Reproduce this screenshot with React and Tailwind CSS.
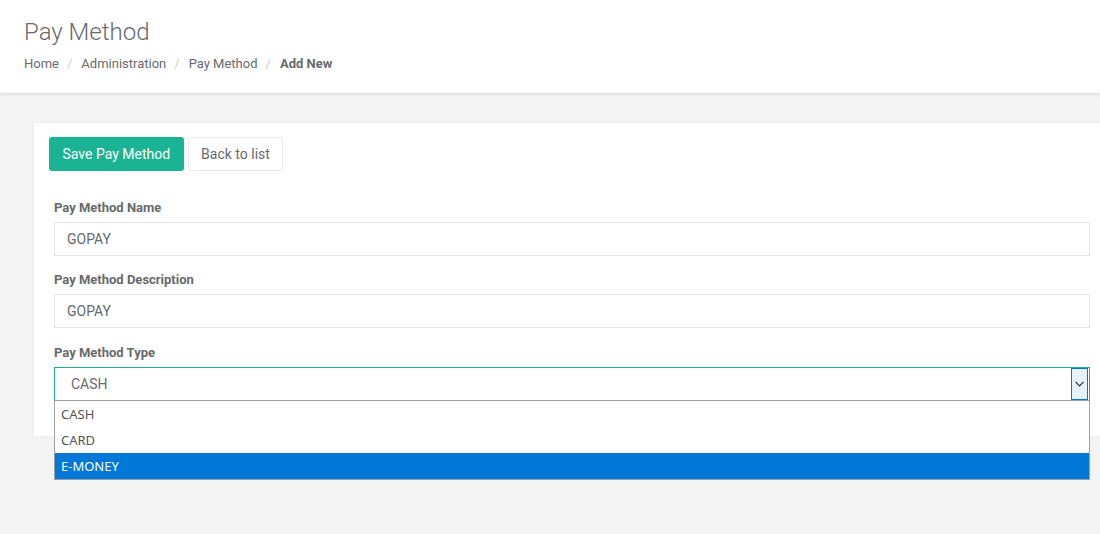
import React from "react";

const crumbs = ["Home", "Administration", "Pay Method"];

function Field({ label, value }) {
  return (
    <div className="mb-[15px]">
      <label className="block text-[13px] font-bold text-[#676a6c] mb-[5px] leading-[18px]">{label}</label>
      <div className="h-[34px] border border-[#e5e6e7] bg-white px-[12px] flex items-center text-[14px] text-[#676a6c]">
        {value}
      </div>
    </div>
  );
}

export default function App() {
  return (
    <div className="w-[1100px] h-[534px] overflow-hidden bg-[#f3f3f4] font-['Roboto',sans-serif] text-[#676a6c]">
      <div className="h-[93px] bg-white px-[24px] pt-[18px] shadow-[0_2px_3px_rgba(0,0,0,0.08)] relative z-10">
        <h2 className="text-[24px] font-light leading-[28px]">Pay Method</h2>
        <div className="flex items-center text-[13px] mt-[9px] leading-[18px]">
          {crumbs.map((c, i) => (
            <React.Fragment key={i}>
              <span>{c}</span>
              <span className="pl-[8px] pr-[9px] text-[#ccc]">/</span>
            </React.Fragment>
          ))}
          <span className="font-bold">Add New</span>
        </div>
      </div>

      <div className="pl-[34px] pt-[30px]">
        <div className="bg-white relative pl-[15px] pr-[10px] pt-[14px] h-[313px] shadow-[0_0_2px_rgba(0,0,0,0.08)]">
          <div className="flex gap-[4px]">
            <button className="h-[34px] px-[13.5px] bg-[#1ab394] text-white text-[14px] rounded-[3px]">Save Pay Method</button>
            <button className="h-[34px] px-[12.5px] bg-white border border-[#e7eaec] text-[#676a6c] text-[14px] rounded-[3px]">Back to list</button>
          </div>
          <div className="pl-[5px] pt-[28px]">
            <Field label="Pay Method Name" value="GOPAY" />
            <Field label="Pay Method Description" value="GOPAY" />
            <div className="relative pt-[1px]">
              <label className="block text-[13px] font-bold text-[#676a6c] mb-[5px] leading-[18px]">Pay Method Type</label>
              <div className="h-[34px] border border-[#1ab394] bg-white flex items-center justify-between text-[14px] text-[#676a6c] pl-[16px] pr-[1px]">
                <span>CASH</span>
                <span className="w-[17px] h-[32px] bg-[#e5f1fb] border border-[#0078d7] flex items-center justify-center">
                  <svg width="9" height="6" viewBox="0 0 9 6" fill="none">
                    <path d="M0.5 0.8 L4.5 4.8 L8.5 0.8" stroke="#333" strokeWidth="1.2" />
                  </svg>
                </span>
              </div>
              <div className="absolute left-0 right-0 top-[57px] z-20 bg-white border border-[#a0a0a0] font-['Noto_Sans',sans-serif] text-[13px]">
                <div className="h-[26px] flex items-center pt-[2px] px-[6px] text-[#555]">CASH</div>
                <div className="h-[26px] flex items-center pt-[2px] px-[6px] text-[#555]">CARD</div>
                <div className="h-[26px] flex items-center pt-[2px] px-[6px] bg-[#0078d7] text-white">E-MONEY</div>
              </div>
            </div>
          </div>
        </div>
      </div>
    </div>
  );
}
